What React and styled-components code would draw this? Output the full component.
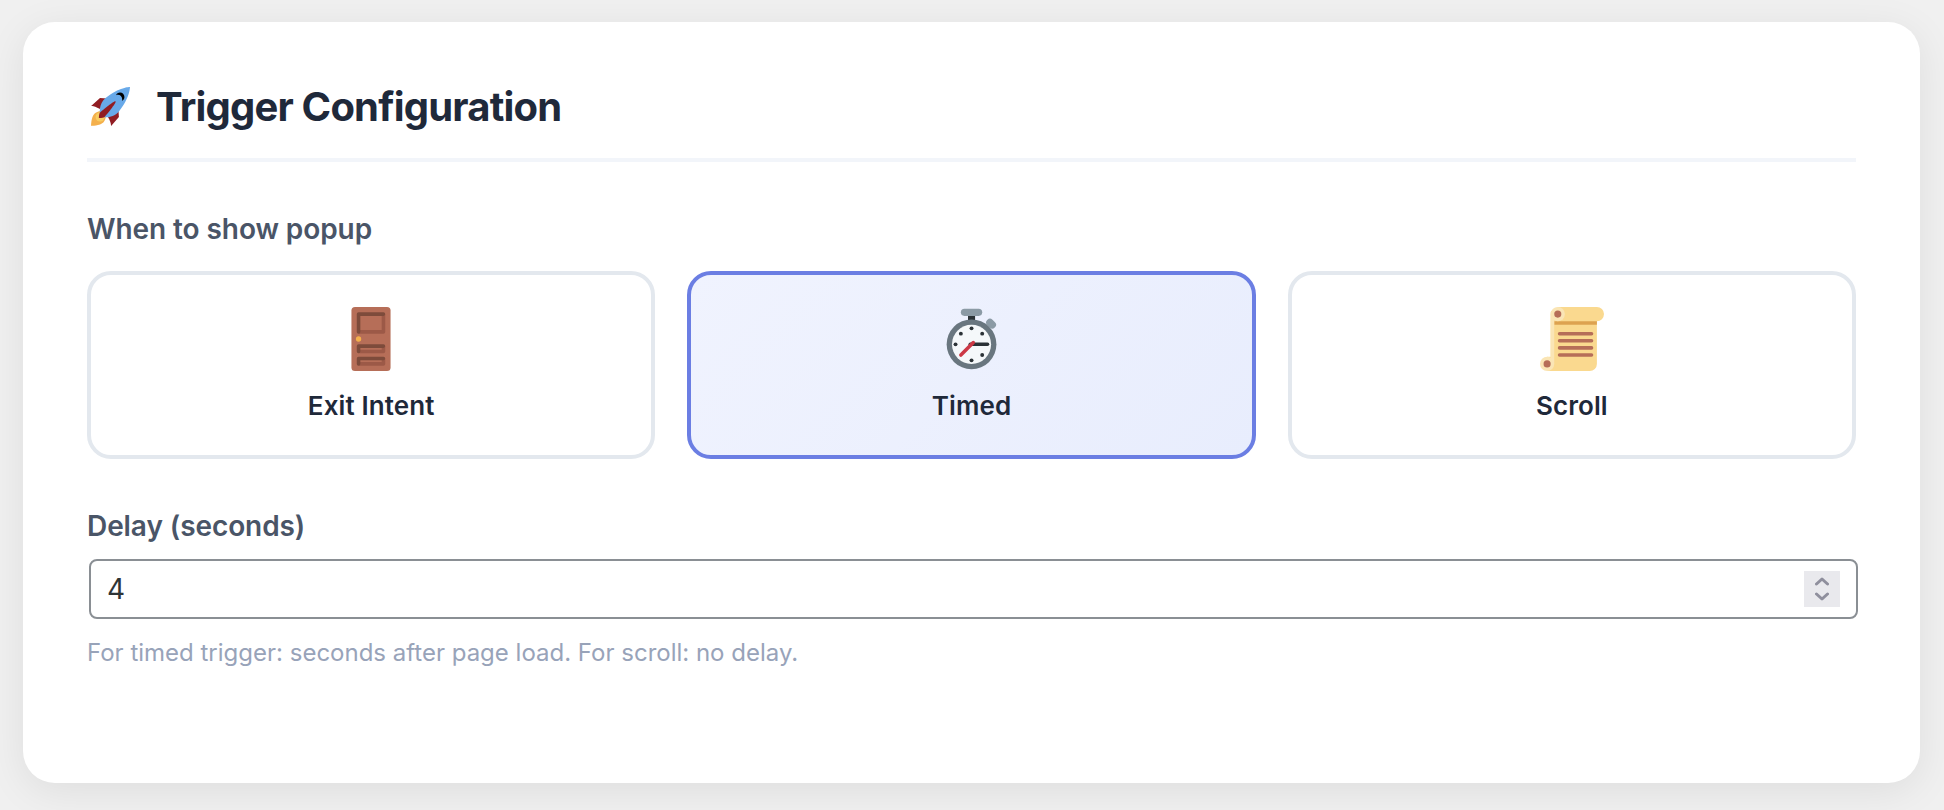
import { useState } from 'react';
import styled, { createGlobalStyle } from 'styled-components';

const GlobalStyle = createGlobalStyle`
  * {
    box-sizing: border-box;
  }
  body {
    margin: 0;
    background: #f0f0f0;
    font-family: Inter, 'Liberation Sans', sans-serif;
    -webkit-font-smoothing: antialiased;
  }
`;
const Page = styled.main`
  height: 810px;
  padding: 22px 24px 27px 23px;
  overflow: hidden;
`;
const Card = styled.section`
  height: 761px;
  padding: 60px 64px;
  border-radius: 32px;
  background: #ffffff;
  box-shadow: 0 8px 40px rgba(0, 0, 0, 0.08);
`;
const Header = styled.header`
  display: flex;
  align-items: center;
  gap: 26px;
  height: 80px;
  padding: 1px 0 27px 3px;
  border-bottom: 4px solid #f2f5fa;
`;
const Title = styled.h2`
  margin: 0;
  color: #1f293a;
  font-size: 40px;
  font-weight: 700;
  line-height: 48px;
  letter-spacing: -0.8px;
`;
const Field = styled.div`
  margin-top: 50px;
`;
const Label = styled.label`
  display: block;
  margin-bottom: ${({ $gap }) => $gap}px;
  color: #4a5567;
  font-size: 28px;
  font-weight: 600;
  line-height: 34px;
  letter-spacing: -0.08px;
`;
const Options = styled.div`
  display: grid;
  grid-template-columns: repeat(3, 1fr);
  gap: 32px;
`;
const Option = styled.button`
  display: flex;
  flex-direction: column;
  align-items: center;
  gap: 19px;
  height: 188px;
  padding: 32px;
  border: 4px solid ${({ $active }) => ($active ? '#6b7ee3' : '#e3e8ee')};
  border-radius: 24px;
  background: ${({ $active }) =>
    $active ? 'linear-gradient(135deg, #f0f3fe 0%, #e8edfd 100%)' : '#ffffff'};
  color: #1f293a;
  font-family: inherit;
  font-size: 26px;
  font-weight: 600;
  line-height: 32px;
  letter-spacing: 0.1px;
  cursor: pointer;
`;
const Emoji = styled.svg`
  display: block;
  flex-shrink: 0;
  width: ${({ $size }) => $size}px;
  height: ${({ $size }) => $size}px;
`;
const NumberBox = styled.div`
  display: flex;
  align-items: center;
  height: 60px;
  margin: 0 -2px 0 2px;
  padding: 0 16px;
  border: 2px solid #8a8f94;
  border-radius: 8px;
  background: #ffffff;
`;
const NumberInput = styled.input`
  flex: 1;
  min-width: 0;
  padding: 0;
  border: 0;
  outline: 0;
  background: transparent;
  color: #2e3436;
  font-family: inherit;
  font-size: 28px;
  line-height: 34px;
`;
const Spinner = styled.div`
  display: flex;
  flex-direction: column;
  width: 36px;
  height: 36px;
  background: #e9e9ed;
`;
const Step = styled.button`
  display: flex;
  justify-content: center;
  align-items: center;
  height: 18px;
  padding: ${({ $up }) => ($up ? '3px 0 0' : '0 0 3px')};
  border: 0;
  background: transparent;
`;
const Help = styled.p`
  margin: 19px 0 0;
  color: #98a3b9;
  font-size: 24px;
  line-height: 30px;
`;

function Rocket() {
  return (
    <Emoji $size={40} viewBox="0 0 36 36">
      <path fill="#911d23" d="M1 17l8-7 16 1 1 16-7 8s.001-5.999-6-12-12-6-12-6z" />
      <path
        fill="#f4b04c"
        d="M.973 35s-.036-7.979 2.985-11S15 21.187 15 21.187 14.999 29 11.999 32c-3 3-11.026 3-11.026 3z"
      />
      <circle fill="#f8cd61" cx="9" cy="27" r="4" />
      <path fill="#68a9e9" d="M35.999 0s-10 0-22 10c-6 5-6 14-4 16s11 2 16-4c10-12 10-22 10-22z" />
      <path d="M26.999 5c-1.623 0-3.013.971-3.641 2.36.502-.227 1.055-.36 1.641-.36 2.209 0 4 1.791 4 4 0 .586-.133 1.139-.359 1.64 1.389-.627 2.359-2.017 2.359-3.64 0-2.209-1.791-4-4-4z" />
      <path fill="#911d23" d="M8 28s0-4 1-5 13.001-10.999 14-10-9.001 13-10.001 14S8 28 8 28z" />
    </Emoji>
  );
}

function Door() {
  return (
    <Emoji $size={64} viewBox="0 0 36 36">
      <rect fill="#b66e58" x="7" width="22" height="36" rx="2" />
      <path
        fill="none"
        stroke="#9c5947"
        strokeWidth="2"
        strokeLinejoin="round"
        d="M11 14h14V4M11 25h14v-3M11 32h14v-3"
      />
      <path
        fill="none"
        stroke="#7d4b3b"
        strokeWidth="2"
        strokeLinecap="round"
        strokeLinejoin="round"
        d="M25 4H11v10M25 22H11v3M25 29H11v3"
      />
      <circle fill="#f4b04c" cx="11" cy="18" r="1.5" />
    </Emoji>
  );
}

function Stopwatch() {
  return (
    <Emoji $size={64} viewBox="-0.3 0 36 36">
      <path fill="#2b3236" d="M16 4h4v4h-4z" />
      <rect fill="#8b9aa5" x="12" y="1" width="12" height="4" rx="2" />
      <rect fill="#8b9aa5" x="26" y="7.25" width="6" height="4.2" rx="2" transform="rotate(45 29 9.35)" />
      <circle fill="#69767f" cx="18" cy="21" r="14" />
      <circle fill="#f5f8fa" cx="18" cy="21" r="11" />
      <g fill="#2b3236">
        <circle cx="18" cy="12" r="1.1" />
        <circle cx="24" cy="15" r="1.1" />
        <circle cx="12" cy="15" r="1.1" />
        <circle cx="9" cy="21" r="1.1" />
        <circle cx="24" cy="27" r="1.1" />
        <circle cx="18" cy="30" r="1.1" />
      </g>
      <path stroke="#2b3236" strokeWidth="2" strokeLinecap="round" d="M17.3 21H27" />
      <path stroke="#cc3945" strokeWidth="2" strokeLinecap="round" d="M19 20l-7 7" />
    </Emoji>
  );
}

function ScrollPaper() {
  return (
    <Emoji $size={64} viewBox="0 0 36 36">
      <path fill="#fad98f" d="M10 0h22a4 4 0 0 1 0 8v24a4 4 0 0 1-4 4H4V4z" />
      <path fill="#ffffff" d="M3 0h3v28H3z" />
      <path fill="#dda250" d="M8 8h24v2H8z" />
      <path fill="#fae5b5" d="M6 4h2v28H6z" />
      <circle fill="#fae5b5" cx="10" cy="4" r="4" />
      <circle fill="#fae5b5" cx="4" cy="32" r="4" />
      <circle fill="#b66e58" cx="10" cy="4" r="2" />
      <circle fill="#b66e58" cx="4" cy="32" r="2" />
      <path
        stroke="#b66e58"
        strokeWidth="2"
        strokeLinecap="round"
        d="M11 15h18M11 19h18M11 23h18M11 27h18"
      />
    </Emoji>
  );
}

const triggers = [
  { id: 'exit', label: 'Exit Intent', Icon: Door },
  { id: 'timed', label: 'Timed', Icon: Stopwatch },
  { id: 'scroll', label: 'Scroll', Icon: ScrollPaper },
];

function Chevron({ d }) {
  return (
    <svg width="14" height="9" viewBox="0 0 14 9" fill="none">
      <path d={d} stroke="#8f8f9d" strokeWidth="3" strokeLinecap="round" strokeLinejoin="round" />
    </svg>
  );
}

function App() {
  const [trigger, setTrigger] = useState('timed');
  const [delay, setDelay] = useState(4);
  return (
    <>
      <GlobalStyle />
      <Page>
        <Card>
          <Header>
            <Rocket />
            <Title>Trigger Configuration</Title>
          </Header>
          <Field>
            <Label as="div" $gap={25}>
              When to show popup
            </Label>
            <Options>
              {triggers.map(({ id, label, Icon }) => (
                <Option key={id} $active={trigger === id} onClick={() => setTrigger(id)}>
                  <Icon />
                  {label}
                </Option>
              ))}
            </Options>
          </Field>
          <Field>
            <Label htmlFor="delay" $gap={16}>
              Delay (seconds)
            </Label>
            <NumberBox>
              <NumberInput
                id="delay"
                inputMode="numeric"
                value={delay}
                onChange={(e) => setDelay(Number(e.target.value) || 0)}
              />
              <Spinner>
                <Step $up aria-label="Increase" onClick={() => setDelay(delay + 1)}>
                  <Chevron d="M1.5 7L7 2l5.5 5" />
                </Step>
                <Step aria-label="Decrease" onClick={() => setDelay(Math.max(0, delay - 1))}>
                  <Chevron d="M1.5 2L7 7l5.5-5" />
                </Step>
              </Spinner>
            </NumberBox>
            <Help>For timed trigger: seconds after page load. For scroll: no delay.</Help>
          </Field>
        </Card>
      </Page>
    </>
  );
}

export default App;
